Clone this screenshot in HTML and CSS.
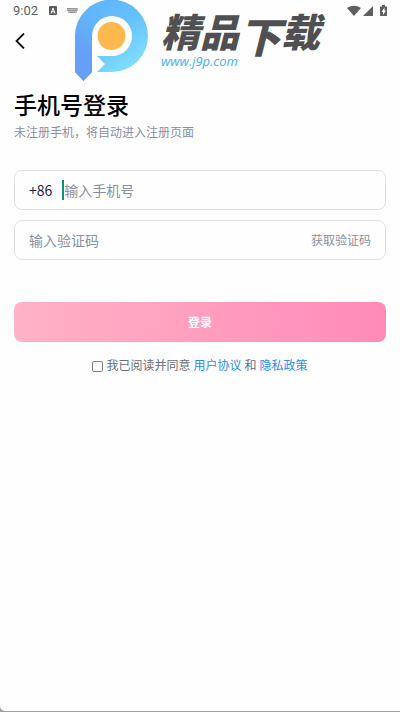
FILE: index.html
```html
<!DOCTYPE html>
<html lang="zh-CN">
<head>
    <meta charset="UTF-8">
    <meta name="viewport" content="width=device-width, initial-scale=1.0">
    <title>手机号登录</title>
    <link rel="stylesheet" href="styles.css">
</head>
<body>
    <div class="screen">

        <!-- 状态栏 -->
        <div class="status-bar">
            <span class="time">9:02</span>
            <svg class="status-left" width="32" height="12" viewBox="0 0 32 12">
                <rect x="0" y="1" width="8" height="9" rx="1" fill="#5c5c5c"/>
                <path d="M2 8.500 4 3l2 5.500M2.800 6.800h2.500" fill="none" stroke="#fff"/>
                <path d="M18 3h11v3h-1v2h-9v-2h-1z" fill="#bdbdbd"/>
                <path d="M18.500 3.500h10M18.500 5.500h10M20.500 7.500h6" stroke="#6d6d6d" stroke-dasharray="1 1"/>
            </svg>
            <svg class="status-right" width="42" height="12" viewBox="0 0 42 12">
                <path d="M0 3Q7-1.500 14 3L7 11z" fill="#5f5f5f"/>
                <path d="M26 1v10H16z" fill="#5f5f5f"/>
                <path d="M33 1.500h2V0h3v1.500h2V11h-7z" fill="#5f5f5f"/>
                <path d="M37.500 2.500 34.500 7h1.500v3l3-4.500h-1.500z" fill="#fff"/>
            </svg>
        </div>

        <div class="nav-bar">
            <button class="back-btn" type="button" aria-label="返回">
                <svg width="10" height="16" viewBox="0 0 10 16"><path d="M9 .5 1.500 8 9 15.500" fill="none" stroke="#111" stroke-width="1.800"/></svg>
            </button>
        </div>

        <!-- 站点标志 -->
        <div class="brand">
            <svg width="74" height="82" viewBox="0 0 74 82">
                <defs>
                    <linearGradient id="ring" x1="0" y1="0" x2=".6" y2="1">
                        <stop offset="0" stop-color="#5fb2f8"/>
                        <stop offset=".5" stop-color="#64bffb"/>
                        <stop offset="1" stop-color="#83e1ff"/>
                    </linearGradient>
                    <linearGradient id="stem" gradientUnits="userSpaceOnUse" x1="12" y1="10" x2="2" y2="50">
                        <stop offset="0" stop-color="#659ff8" stop-opacity="0"/>
                        <stop offset="1" stop-color="#659ff8"/>
                    </linearGradient>
                </defs>
                <path d="M0 36A36.500 36.500 0 0 1 73 36A36 36 0 0 1 37 72H22L30 64 22 56H37A20 20 0 1 0 17 36V72L8.500 81 0 72z" fill="url(#ring)"/>
                <path d="M0 36A36.500 36.500 0 0 1 36.500 -.5V16A20 20 0 0 0 17 36V72L8.500 81 0 72z" fill="url(#stem)"/>
                <circle cx="36.500" cy="36" r="14" fill="#ffb84d"/>
            </svg>
            <div class="brand-text">
                <div class="brand-name">精品<span class="brand-big">下</span>载</div>
                <div class="brand-url">www.j9p.com</div>
            </div>
        </div>

        <!-- 登录表单 -->
        <form class="login">
            <h1>手机号登录</h1>
            <p class="hint">未注册手机，将自动进入注册页面</p>

            <div class="field">
                <label class="prefix" for="phone">+86</label>
                <input class="phone" type="tel" id="phone" placeholder="输入手机号">
            </div>
            <div class="field">
                <input type="text" id="code" aria-label="验证码" placeholder="输入验证码">
                <button class="code-btn" type="button">获取验证码</button>
            </div>

            <button class="btn" type="button">登录</button>

            <div class="agreement">
                <input type="checkbox" id="agree">
                <label for="agree">我已阅读并同意</label>
                <a href="#">用户协议</a>
                <span>和</span>
                <a href="#">隐私政策</a>
            </div>
        </form>
    </div>
</body>
</html>
```
FILE: styles.css
```css
* {
    margin: 0;
    padding: 0;
    box-sizing: border-box;
}

body {
    background-color: #a0a0a0;
    font-family: "Noto Sans", "Noto Sans CJK SC", sans-serif;
}

button, input {
    font-family: inherit;
    border: none;
    background: none;
}

.screen {
    position: relative;
    min-height: calc(100vh - 1px);
    background-color: #fefefe;
    border-bottom-left-radius: 5px;
}

.status-bar {
    display: flex;
    align-items: center;
    height: 22px;
    padding: 0 11px 0 13px;
}

.time {
    font: 13px/22px Roboto, sans-serif;
    color: #5f5f5f;
}

.status-left {
    margin-left: 11px;
}

.status-right {
    margin-left: auto;
}

.nav-bar {
    display: flex;
    align-items: center;
    height: 38px;
    padding: 0 15px;
}

.back-btn {
    height: 16px;
    cursor: pointer;
}

.back-btn svg {
    display: block;
}

/* floats over the top bars */
.brand {
    position: absolute;
    top: 0;
    left: 75px;
    display: flex;
    gap: 12px;
}

.brand-text {
    padding-top: 10px;
    font-style: italic;
}

.brand-name {
    font-family: "Noto Sans CJK SC", sans-serif;
    font-size: 39px;
    font-weight: 900;
    line-height: 40px;
    height: 43px;
    color: #505052;
    white-space: nowrap;
}

.brand-big {
    font-size: 42px;
    vertical-align: -6px;
    line-height: 1;
}

.brand-url {
    font-family: "Open Sans", sans-serif;
    font-size: 13px;
    line-height: 16px;
    color: #45b1f0;
}

.login {
    padding: 28px 14px 0;
}

h1 {
    font-size: 23px;
    font-weight: 500;
    line-height: 34px;
    color: #000;
}

.hint {
    margin-bottom: 26px;
    font-size: 12px;
    line-height: 22px;
    color: #8b90a0;
}

.field {
    display: flex;
    align-items: center;
    height: 40px;
    margin-bottom: 10px;
    padding: 0 14px;
    border: 1px solid #dfe0e3;
    border-radius: 8px;
}

.prefix {
    margin-right: 10px;
    font-family: "Noto Sans CJK SC", sans-serif;
    font-size: 14px;
    color: #1b2440;
}

.field input {
    flex: 1;
    min-width: 0;
    height: 20px;
    font-size: 14px;
    color: #1b2440;
    outline: none;
}

.field .phone {
    border-left: 2px solid #128c7c;
}

.field input::placeholder {
    color: #8b90a0;
}

.code-btn {
    font-size: 12px;
    color: #8b90a0;
    cursor: pointer;
}

.btn {
    display: block;
    width: 100%;
    height: 40px;
    margin-top: 42px;
    border-radius: 8px;
    background: linear-gradient(to right, #ffb3c6, #ff8ab9);
    color: #fff;
    font-size: 12px;
    font-weight: bold;
    cursor: pointer;
}

.agreement {
    display: flex;
    align-items: center;
    justify-content: center;
    gap: 3px;
    margin-top: 14px;
    font-size: 12px;
    line-height: 20px;
    color: #666d7c;
}

.agreement input {
    appearance: none;
    width: 11px;
    height: 11px;
    border: 1px solid #7c8190;
    border-radius: 2px;
}

.agreement input:checked {
    background-color: #2b8df0;
}

.agreement a {
    color: #2b8df0;
    text-decoration: none;
}
```
